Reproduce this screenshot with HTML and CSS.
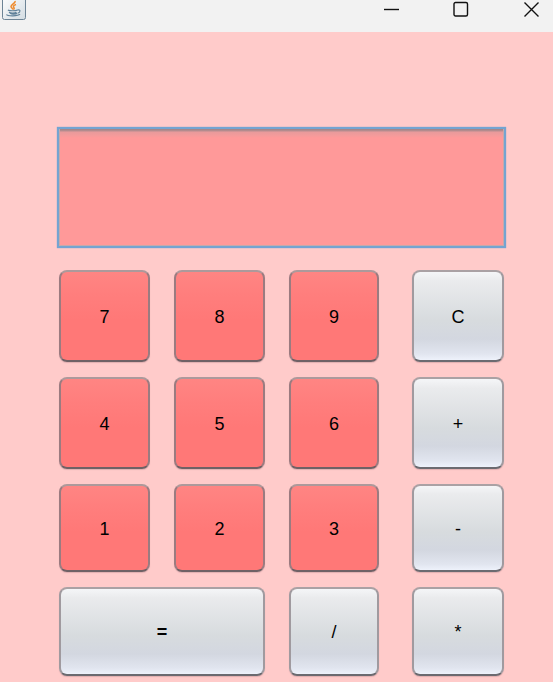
FILE: index.html
```html
<!DOCTYPE html>
<html lang="en">
<head>
<meta charset="utf-8">
<title>Calculator</title>
<link rel="stylesheet" href="styles.css">
</head>
<body>
<header class="titlebar">
  <svg class="app-icon" width="26" height="21" viewBox="0 0 26 21" aria-hidden="true">
    <defs>
      <linearGradient id="tile" x1="0" y1="0" x2="1" y2="1">
        <stop offset="0" stop-color="#ffffff"/>
        <stop offset="1" stop-color="#d3dce2"/>
      </linearGradient>
    </defs>
    <rect x="2.5" y="-4.5" width="23" height="24" rx="2" fill="url(#tile)" stroke="#6d8496"/>
    <path d="M15 1c1 2-4 3.500-4 5.500 0 1.200 1.500 1.800 1.800 3M16 4.500c-3 1-3 2-2 3.200.6.900 0 1.500-.6 2" fill="none" stroke="#ee8a2c" stroke-width="1.500"/>
    <path d="M8 10c1 1 8 1 9.500 0M9 12.300c1.500 1 6 1 7.500 0M17.500 10c3-.8 3.500 2 .2 3.200M6.500 14.500c1 1.800 11.500 1.800 13.500-.3M10 12.500c0 2 6 2 7 .6" fill="none" stroke="#5f8099" stroke-width="1.200"/>
  </svg>
  <div class="window-controls">
    <button class="window-button" aria-label="Minimize"><svg width="16" height="16" viewBox="0 0 16 16"><path d="M1 8.500h15" /></svg></button>
    <button class="window-button" aria-label="Maximize"><svg width="16" height="16" viewBox="0 0 16 16"><rect x="1" y="1.500" width="13.500" height="13.500" rx="1.500"/></svg></button>
    <button class="window-button" aria-label="Close"><svg width="16" height="16" viewBox="0 0 16 16"><path d="M1.500 1.500l14 14M15.500 1.500l-14 14"/></svg></button>
  </div>
</header>
<main class="calculator">
  <input class="display" type="text" aria-label="Display">
  <div class="keypad">
    <button class="key digit">7</button>
    <button class="key digit">8</button>
    <button class="key digit">9</button>
    <button class="key side">C</button>
    <button class="key digit">4</button>
    <button class="key digit">5</button>
    <button class="key digit">6</button>
    <button class="key side">+</button>
    <button class="key digit">1</button>
    <button class="key digit">2</button>
    <button class="key digit">3</button>
    <button class="key side">-</button>
    <button class="key equals">=</button>
    <button class="key">/</button>
    <button class="key side">*</button>
  </div>
</main>
</body>
</html>
```
FILE: styles.css
```css
* {
  box-sizing: border-box;
}

body {
  margin: 0;
  background: #ffcbca;
  font-family: "Liberation Sans", Arial, sans-serif;
}

.titlebar {
  display: flex;
  justify-content: space-between;
  align-items: flex-start;
  height: 32px;
  background: #f2f2f2;
}

.app-icon {
  display: block;
}

.window-controls {
  display: flex;
  gap: 26px;
}

.window-button {
  display: flex;
  justify-content: center;
  width: 44px;
  padding: 1px 0;
  border: 0;
  background: transparent;
}

.window-button svg {
  fill: none;
  stroke: #111;
  stroke-width: 1.4;
}

.calculator {
  padding: 95px 47px 5px 57px;
}

.display {
  display: block;
  width: 100%;
  height: 121px;
  padding: 0 12px;
  border: 2px solid #73a4d1;
  border-radius: 0;
  outline: 0;
  background: linear-gradient(#9d8588 0, #b98e90 2px, #e89a9b 3px, #f29b9b 6px, #ff9999 9px);
  box-shadow: inset 1px 0 #c5a9ab, inset -1px 0 #c5a9ab, inset 0 -1px #c5a9ab, 0 0 1px #73a4d1;
  font: 18px "Liberation Sans", Arial, sans-serif;
}

.keypad {
  display: grid;
  grid-template-columns: 91fr 91fr 90fr 101fr;
  grid-template-rows: 92px 92px 88px 89px;
  gap: 15px 24px;
  padding: 22px 2px 0;
}

.key {
  padding: 2px 0 0;
  border: 2px solid;
  border-color: #aaa1a4 #a09a9f #6b6a70;
  border-radius: 8px;
  background: linear-gradient(#f7f8fa, #eaebed 12%, #d7dbde 55%, #d3d7e0 75%, #e1e5ef 91%, #f2f6ff);
  background-origin: border-box;
  box-shadow: 0 1px 1px #e0aeb0;
  color: #000;
  font: 18px "Liberation Sans", Arial, sans-serif;
}

.digit {
  border-color: #ad999b #9b7b80 #6f6165;
  background: linear-gradient(#ff8583, #ff7e7d 25%, #ff7877 55%, #ff7877);
}

.side {
  margin-left: 9px;
}

.equals {
  grid-column: span 2;
  font-weight: bold;
}
```
